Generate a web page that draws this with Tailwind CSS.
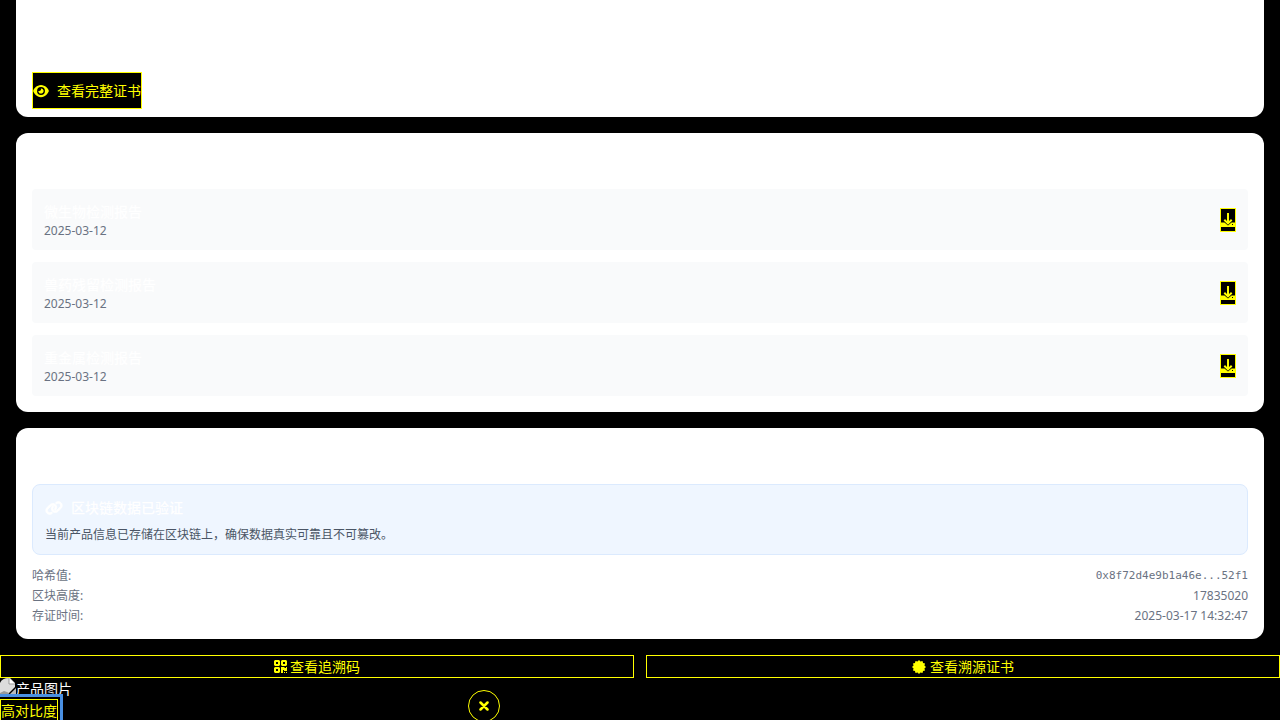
<!DOCTYPE html>
<html lang="zh-CN">
<head>
<meta charset="utf-8">
<meta name="viewport" content="width=device-width, initial-scale=1">
<title>产品溯源</title>
<script src="https://cdn.jsdelivr.net/npm/@tailwindcss/browser@4"></script>
</head>
<body class="h-screen overflow-hidden bg-black font-['Noto_Sans','Noto_Sans_CJK_SC',sans-serif] text-sm/[21px] text-white">
<svg class="hidden" aria-hidden="true">
  <symbol id="download" viewBox="0 0 14 14"><path fill="currentColor" fill-rule="evenodd" d="M0 9.500h3.500l3.500 3 3.500-3H14V14H0zM11 11h1v1h-1z"/><path d="M7 0v10M3.300 6.800L7 10.400l3.700-3.600" fill="none" stroke="currentColor" stroke-width="2"/></symbol>
</svg>
<main>
  <section class="mx-4 mb-4 rounded-b-xl bg-white px-4 pt-18 pb-2">
    <button class="flex h-[37px] items-center gap-2 border border-[#ff0] bg-black text-[#ff0]">
      <svg class="h-[14px] w-4" viewBox="0 0 576 512" fill="currentColor"><path d="M288 32c-80.800 0-145.500 36.800-192.600 80.600C48.600 156 17.300 208 2.500 243.700c-3.300 7.900-3.300 16.700 0 24.600C17.300 304 48.600 356 95.400 399.400C142.500 443.200 207.200 480 288 480s145.500-36.800 192.600-80.600c46.800-43.500 78.100-95.400 93-131.100c3.300-7.900 3.300-16.700 0-24.600c-14.900-35.700-46.200-87.700-93-131.100C433.500 68.800 368.800 32 288 32zM144 256a144 144 0 1 1 288 0 144 144 0 1 1-288 0zm144-64c0 35.300-28.700 64-64 64c-7.100 0-13.900-1.200-20.300-3.300c-5.500-1.800-11.900 1.600-11.700 7.400c.3 6.900 1.300 13.800 3.200 20.700c13.700 51.200 66.400 81.600 117.600 67.900s81.600-66.400 67.900-117.600c-11.100-41.500-47.800-69.400-88.600-71.100c-5.800-.2-9.200 6.100-7.400 11.700c2.100 6.400 3.300 13.200 3.300 20.300z"/></svg>
      <span>查看完整证书</span>
    </button>
  </section>

  <section class="mx-4 mb-4 rounded-xl bg-white px-4 pt-14 pb-4">
    <ul class="flex flex-col gap-3">
      <li class="flex items-center justify-between rounded bg-gray-50 px-3 pt-3 pb-[11px]">
        <div><h3 class="mb-px font-medium">微生物检测报告</h3><p class="text-xs/4 text-gray-500">2025-03-12</p></div>
        <button aria-label="下载微生物检测报告" class="flex h-6 w-4 items-center justify-center border border-[#ff0] bg-black text-[#ff0]"><svg class="h-3.5 w-3.5"><use href="#download"/></svg></button>
      </li>
      <li class="flex items-center justify-between rounded bg-gray-50 px-3 pt-3 pb-[11px]">
        <div><h3 class="mb-px font-medium">兽药残留检测报告</h3><p class="text-xs/4 text-gray-500">2025-03-12</p></div>
        <button aria-label="下载兽药残留检测报告" class="flex h-6 w-4 items-center justify-center border border-[#ff0] bg-black text-[#ff0]"><svg class="h-3.5 w-3.5"><use href="#download"/></svg></button>
      </li>
      <li class="flex items-center justify-between rounded bg-gray-50 px-3 pt-3 pb-[11px]">
        <div><h3 class="mb-px font-medium">重金属检测报告</h3><p class="text-xs/4 text-gray-500">2025-03-12</p></div>
        <button aria-label="下载重金属检测报告" class="flex h-6 w-4 items-center justify-center border border-[#ff0] bg-black text-[#ff0]"><svg class="h-3.5 w-3.5"><use href="#download"/></svg></button>
      </li>
    </ul>
  </section>

  <section class="mx-4 mb-4 rounded-xl bg-white px-4 pt-14 pb-[15px]">
    <div class="mb-[13px] rounded-lg border border-blue-100 bg-blue-50 px-3 pt-3 pb-[11px]">
      <h3 class="mb-[9px] flex items-center gap-2 font-medium">
        <svg class="h-[14px] w-[18px]" viewBox="0 0 640 512" fill="currentColor" stroke="currentColor" stroke-width="28"><path d="M579.800 267.700c56.500-56.500 56.500-148 0-204.500c-50-50-128.800-56.500-186.300-15.400l-1.600 1.100c-14.400 10.300-17.700 30.300-7.400 44.600s30.300 17.700 44.600 7.400l1.600-1.100c32.100-22.900 76-19.300 103.800 8.600c31.500 31.500 31.500 82.500 0 114L422.300 334.800c-31.500 31.500-82.500 31.500-114 0c-27.900-27.900-31.500-71.800-8.600-103.800l1.100-1.600c10.300-14.400 6.900-34.400-7.400-44.600s-34.400-6.900-44.600 7.400l-1.100 1.600C206.500 251.200 213 330 263 380c56.500 56.500 148 56.500 204.500 0L579.800 267.700zM60.200 244.300c-56.500 56.500-56.500 148 0 204.500c50 50 128.800 56.500 186.300 15.400l1.600-1.100c14.400-10.300 17.700-30.300 7.400-44.600s-30.300-17.700-44.600-7.400l-1.600 1.100c-32.100 22.900-76 19.300-103.800-8.600C74 372 74 321 105.500 289.500L217.700 177.200c31.500-31.500 82.500-31.500 114 0c27.900 27.900 31.500 71.800 8.600 103.900l-1.100 1.600c-10.300 14.400-6.900 34.400 7.400 44.600s34.400 6.900 44.600-7.400l1.100-1.600C433.500 260.800 427 182 377 132c-56.500-56.500-148-56.500-204.500 0L60.200 244.300z"/></svg>
        <span>区块链数据已验证</span>
      </h3>
      <p class="text-xs/4 text-gray-600">当前产品信息已存储在区块链上，确保数据真实可靠且不可篡改。</p>
    </div>
    <dl class="flex flex-col gap-1 text-xs/4 text-gray-500">
      <div class="flex justify-between"><dt>哈希值:</dt><dd class="font-['DejaVu_Sans_Mono',monospace] text-[11px]/4">0x8f72d4e9b1a46e...52f1</dd></div>
      <div class="flex justify-between"><dt>区块高度:</dt><dd>17835020</dd></div>
      <div class="flex justify-between"><dt>存证时间:</dt><dd>2025-03-17 14:32:47</dd></div>
    </dl>
  </section>

  <div class="grid grid-cols-2 gap-3">
    <button class="flex items-center justify-center gap-[3px] border border-[#ff0] bg-black text-[#ff0]">
      <svg class="h-[13px] w-[13px]" viewBox="0 0 13 13" fill="currentColor" fill-rule="evenodd"><path d="M1 0h4l1 1v4L5 6H1L0 5V1zM2 2v2h2V2zM8 0h4l1 1v4l-1 1H8L7 5V1zM9 2v2h2V2zM1 7h4l1 1v4l-1 1H1l-1-1V8zM2 9v2h2V9zM7 7h3l1 1h1V7h1v4h-3v-1H9v3H7zM10 12h1v1h-1zM12 12h1v1h-1z"/></svg>
      <span>查看追溯码</span>
    </button>
    <button class="flex items-center justify-center gap-1 border border-[#ff0] bg-black text-[#ff0]">
      <svg class="h-[14px] w-[14px]" viewBox="0 0 24 24" fill="currentColor"><path d="M12 0l2.500 2.700L18 1.600l.9 3.500 3.500.9-1.100 3.500L24 12l-2.700 2.500 1.100 3.500-3.500.9-.9 3.500-3.500-1.100L12 24l-2.500-2.700L6 22.400l-.9-3.500-3.500-.9 1.100-3.500L0 12l2.700-2.500L1.600 6l3.500-.9L6 1.600l3.500 1.100z"/></svg>
      <span>查看溯源证书</span>
    </button>
  </div>

  <div class="relative">
    <div class="flex h-[21px] items-center">
      <svg class="h-[21px] w-4" viewBox="0 0 16 21"><path d="M0 5Q2 0 9 0h1l5 5v4L7 17H0z" fill="#dcdcdc"/><path d="M9 0v6h6" fill="#fff" stroke="#999"/><path d="M0 15l4-2 3 1 2 1-2 3H0z" fill="#999"/><path d="M16 10v6h-6z" fill="#bbb"/></svg>
      <span>产品图片</span>
    </div>
    <button class="block border border-[#ff0] bg-black text-[#ff0] outline-3 outline-offset-2 outline-[#4a90e2]">高对比度</button>
    <button aria-label="关闭" class="absolute top-3 left-[468px] flex h-8 w-8 items-center justify-center rounded-full border border-[#ff0] bg-black text-[#ff0]">
      <svg class="h-[10px] w-[10px]" viewBox="0 0 10 10" fill="none" stroke="currentColor" stroke-width="2.500" stroke-linecap="round"><path d="M1.500 1.500l7 7M8.500 1.500l-7 7"/></svg>
    </button>
  </div>
</main>
</body>
</html>
